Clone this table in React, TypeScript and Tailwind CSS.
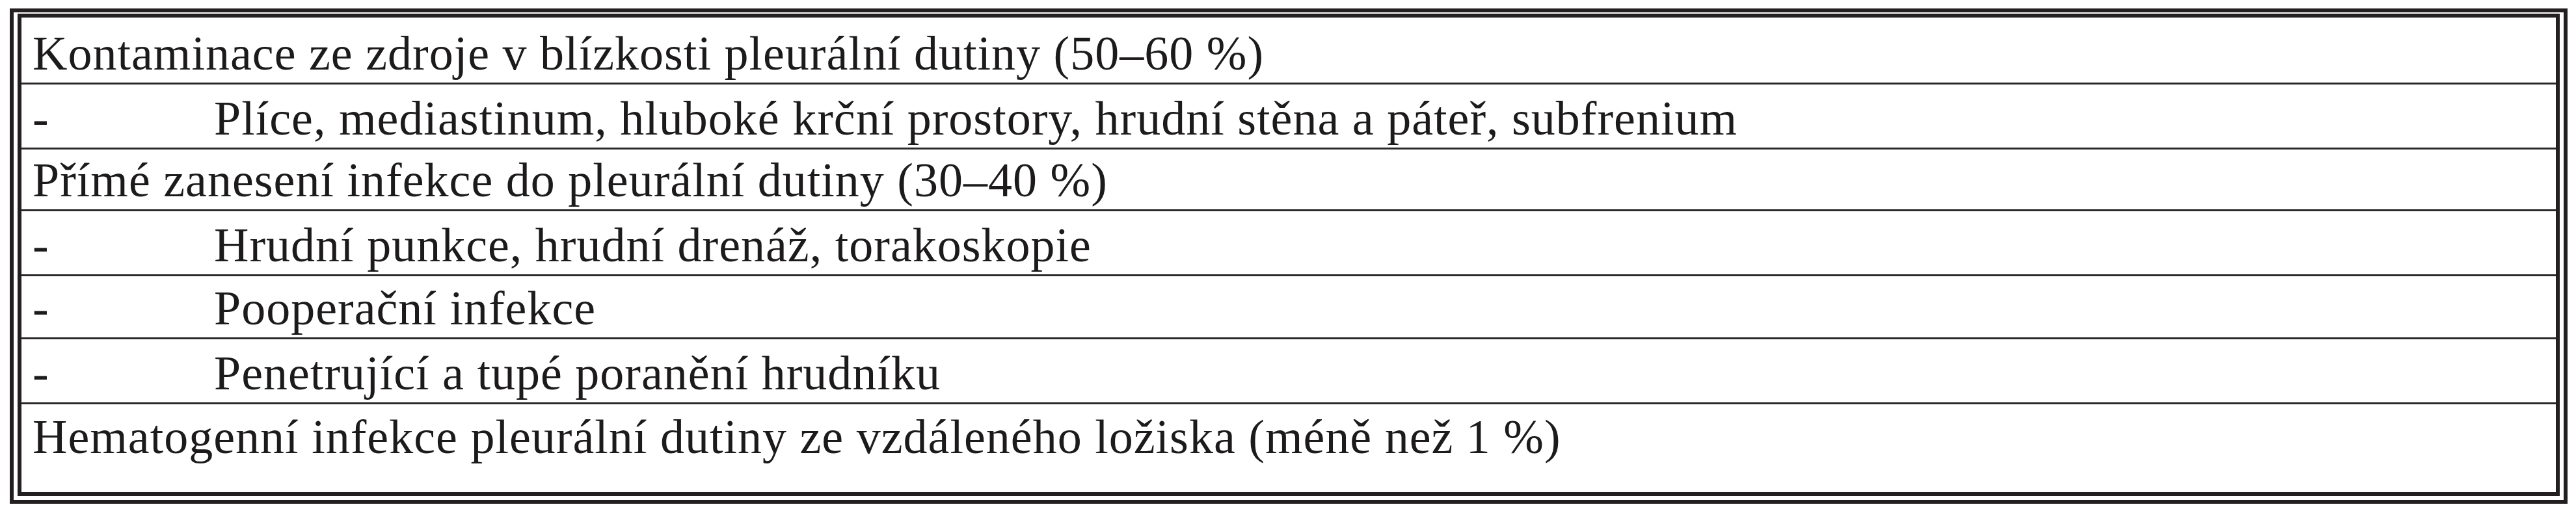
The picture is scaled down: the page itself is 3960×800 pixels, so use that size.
const rows: { text: string; sub?: boolean }[] = [
  { text: "Kontaminace ze zdroje v blízkosti pleurální dutiny (50–60 %)" },
  { text: "Plíce, mediastinum, hluboké krční prostory, hrudní stěna a páteř, subfrenium", sub: true },
  { text: "Přímé zanesení infekce do pleurální dutiny (30–40 %)" },
  { text: "Hrudní punkce, hrudní drenáž, torakoskopie", sub: true },
  { text: "Pooperační infekce", sub: true },
  { text: "Penetrující a tupé poranění hrudníku", sub: true },
];

const heights = ["h-[103px]", "h-[100px]", "h-[95px]", "h-[100px]", "h-[97px]", "h-[100px]"];

export default function App() {
  return (
    <div className="w-[3960px] h-[800px] bg-white pt-[13px] pl-[15px] font-['Liberation_Serif',serif] text-[#1c1a1b] tracking-[1px]">
      <div className="w-[3932px] h-[762px] border-[6px] border-[#231f20] pt-[2px] px-[6px] pb-[6px]">
        <div className="h-full border-[6px] border-[#231f20] flex flex-col">
          {rows.map((r, i) => (
            <div
              key={i}
              className={`${heights[i]} shrink-0 border-b-[3px] border-[#2b2829] flex items-end pb-[8px] pl-[17px] text-[74px] leading-[74px] whitespace-nowrap`}
            >
              {r.sub ? (
                <>
                  <span className="w-[279px] shrink-0">-</span>
                  <span>{r.text}</span>
                </>
              ) : (
                <span>{r.text}</span>
              )}
            </div>
          ))}
          <div className="flex-1 pt-[13px] pl-[17px] text-[74px] leading-[74px] whitespace-nowrap">
            Hematogenní infekce pleurální dutiny ze vzdáleného ložiska (méně než 1 %)
          </div>
        </div>
      </div>
    </div>
  );
}
